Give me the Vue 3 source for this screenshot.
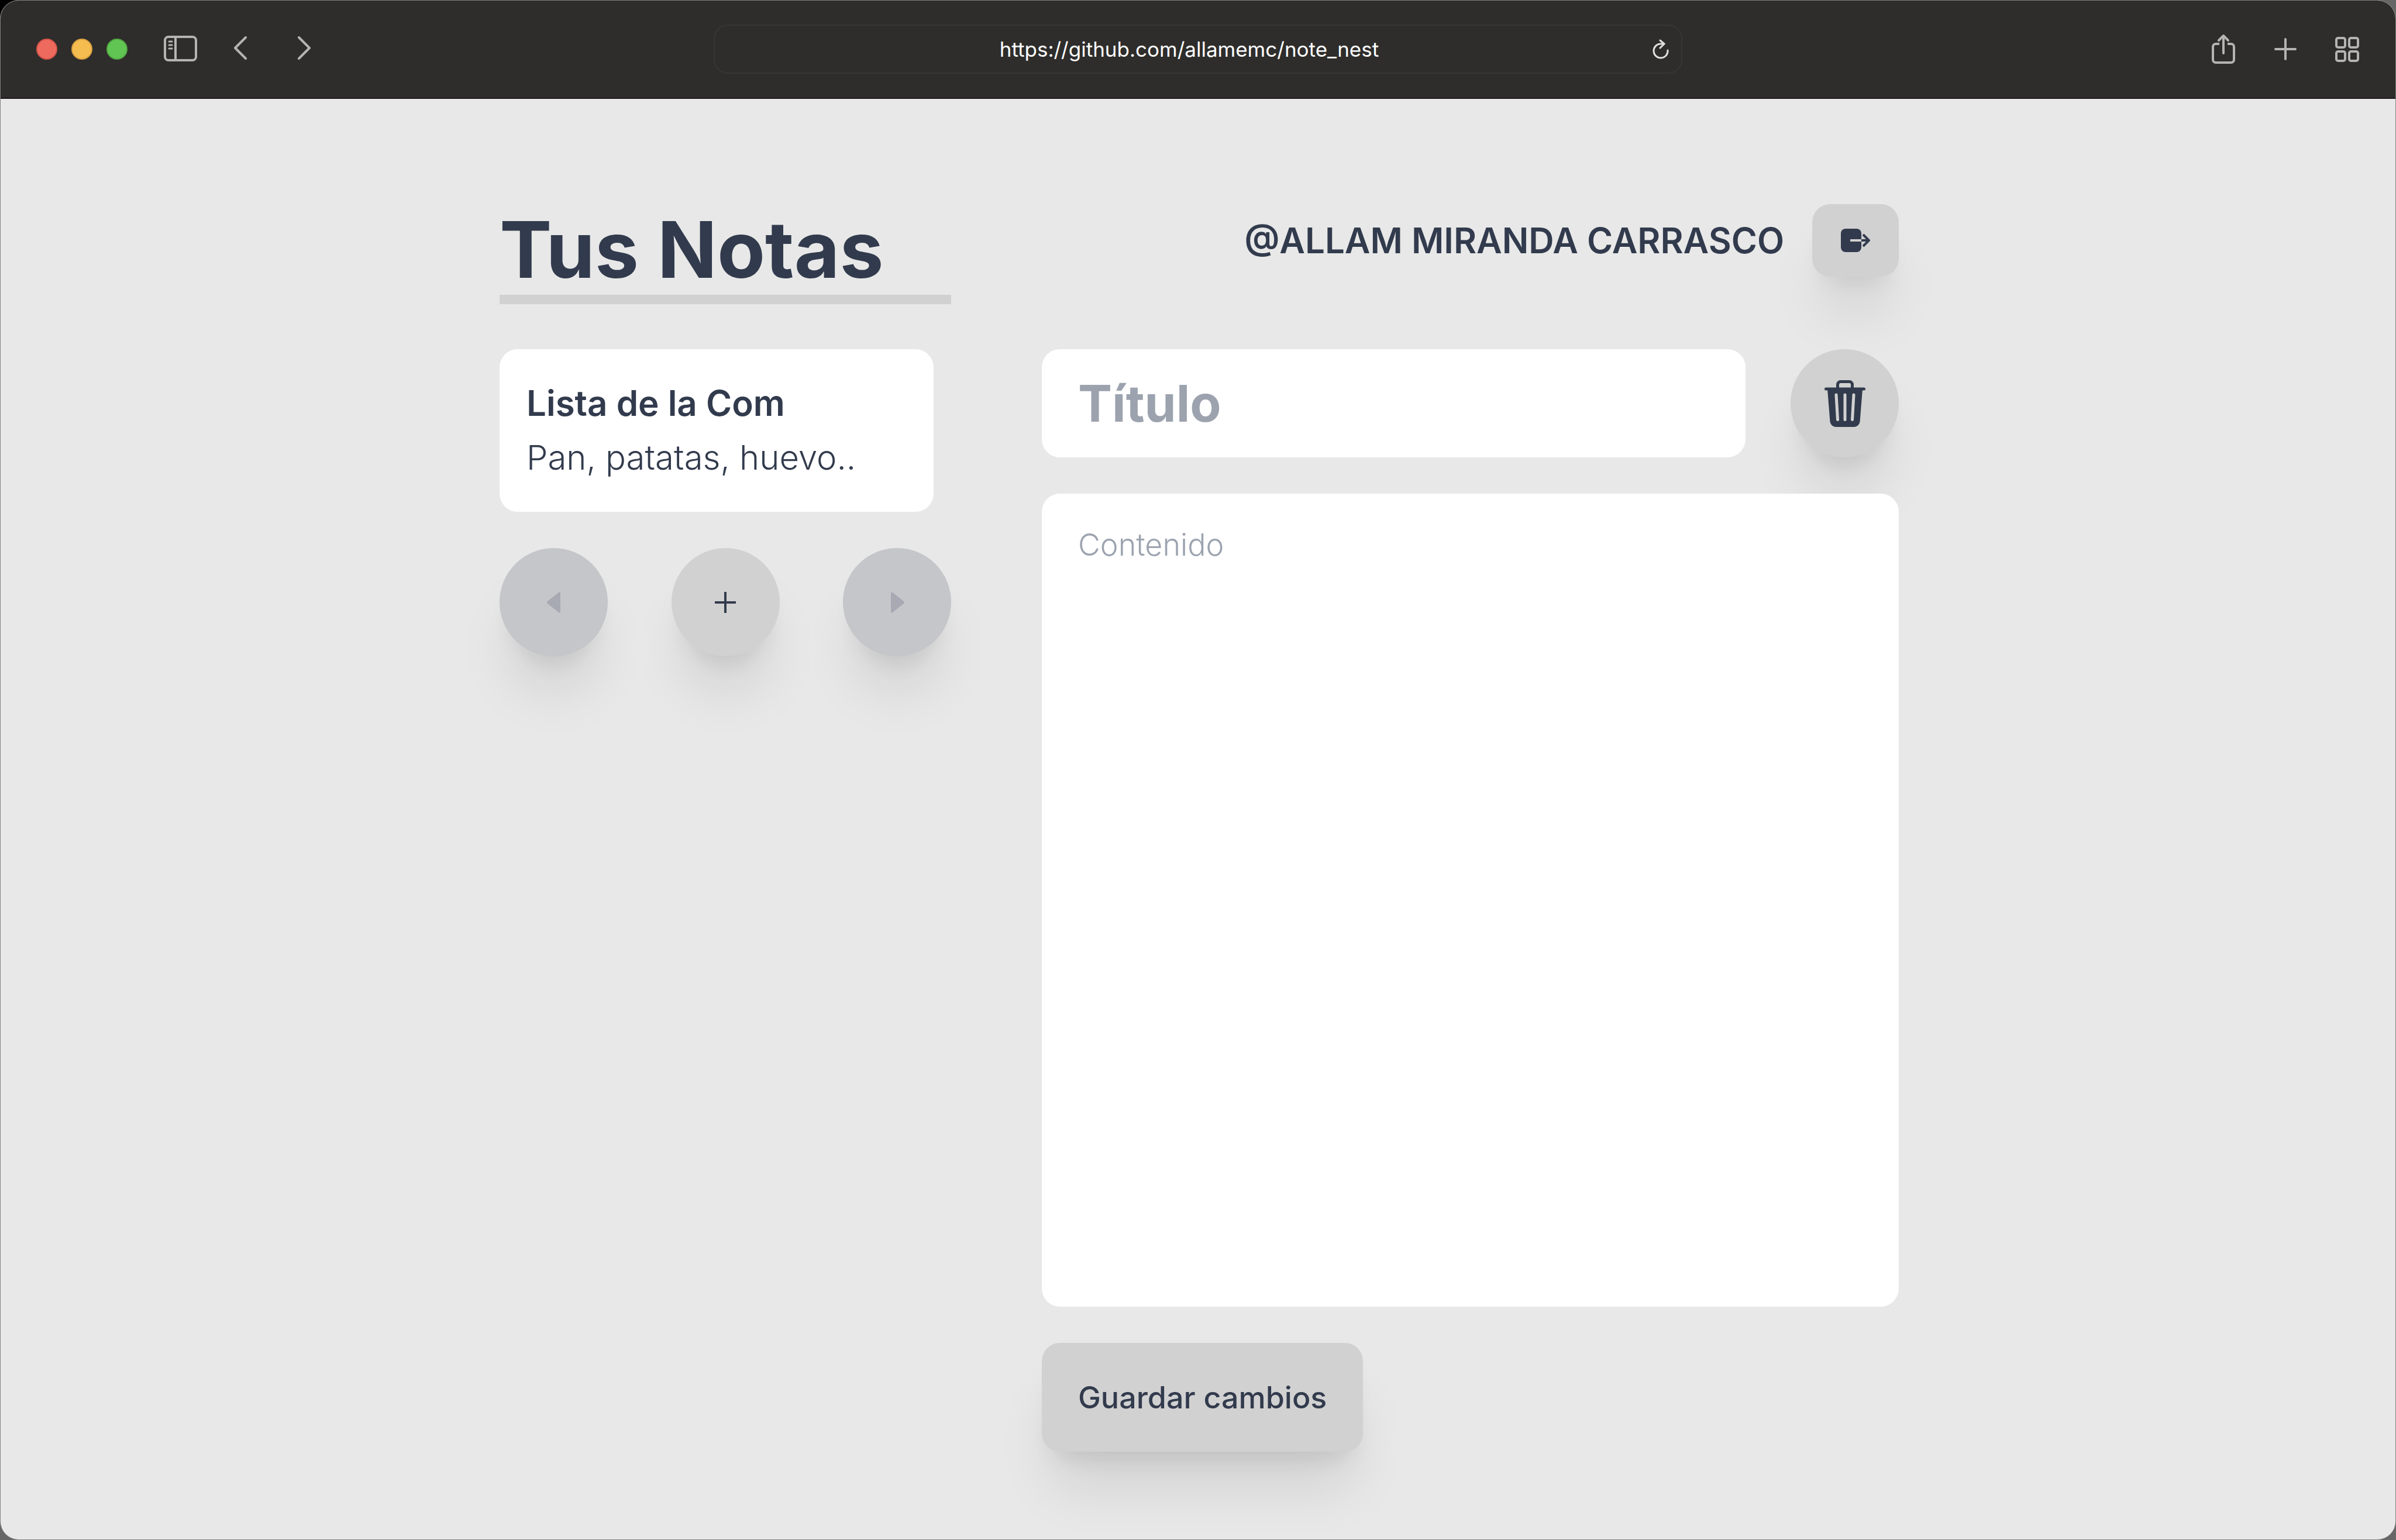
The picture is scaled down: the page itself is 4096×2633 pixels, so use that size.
<script setup>
import { ref } from 'vue'

const address = ref('https://github.com/allamemc/note_nest')
const user = '@ALLAM MIRANDA CARRASCO'
const title = ref('')
const content = ref('')
const notes = [{ title: 'Lista de la Com', preview: 'Pan, patatas, huevo..' }]
const lights = ['red', 'amber', 'green']
</script>

<template>
  <div class="window">
    <header class="toolbar">
      <div class="side">
        <div class="lights">
          <span v-for="light in lights" :key="light" class="light" :class="light"></span>
        </div>
        <button class="tool sidebar" type="button" aria-label="Barra lateral">
          <svg width="58" height="46" viewBox="0 0 58 46" fill="none" stroke="currentColor" stroke-width="4">
            <rect x="2" y="2" width="53" height="40" rx="6" />
            <path d="M20 2v40" />
            <path d="M9 10h5M9 16h5M9 22h5" stroke-width="3" stroke-linecap="round" />
          </svg>
        </button>
        <button class="tool" type="button" aria-label="Atrás">
          <svg width="26" height="44" viewBox="0 0 26 44" fill="none" stroke="currentColor" stroke-width="4" stroke-linecap="round" stroke-linejoin="round">
            <path d="M22 2 4 20l18 18" />
          </svg>
        </button>
        <button class="tool forward" type="button" aria-label="Adelante">
          <svg width="26" height="44" viewBox="0 0 26 44" fill="none" stroke="currentColor" stroke-width="4" stroke-linecap="round" stroke-linejoin="round">
            <path d="m5 2 18 18L5 38" />
          </svg>
        </button>
      </div>

      <div class="address">
        <input v-model="address" type="text" aria-label="Dirección" />
        <button class="reload" type="button" aria-label="Recargar">
          <svg width="30" height="34" viewBox="0 0 30 34" fill="none" stroke="currentColor" stroke-width="3" stroke-linecap="round" stroke-linejoin="round">
            <path d="M27 19A12 12 0 1 1 15 8h6" />
            <path d="m14 2 7 6-7 7" />
          </svg>
        </button>
      </div>

      <div class="side end">
        <button class="tool" type="button" aria-label="Compartir">
          <svg width="42" height="52" viewBox="0 0 42 52" fill="none" stroke="currentColor" stroke-width="4" stroke-linecap="round" stroke-linejoin="round">
            <path d="M14 17H8a5 5 0 0 0-5 5v22a5 5 0 0 0 5 5h26a5 5 0 0 0 5-5V22a5 5 0 0 0-5-5h-6" stroke-linecap="butt" />
            <path d="M21 33V3M13 11l8-8 8 8" />
          </svg>
        </button>
        <button class="tool" type="button" aria-label="Nueva pestaña">
          <svg width="38" height="38" viewBox="0 0 38 38" fill="none" stroke="currentColor" stroke-width="4" stroke-linecap="round">
            <path d="M19 2v34M2 19h34" />
          </svg>
        </button>
        <button class="tool" type="button" aria-label="Vista general">
          <svg width="42" height="44" viewBox="0 0 42 44" fill="none" stroke="currentColor" stroke-width="4">
            <rect x="2" y="3" width="15" height="16" rx="3" />
            <rect x="24" y="3" width="15" height="16" rx="3" />
            <rect x="2" y="26" width="15" height="16" rx="3" />
            <rect x="24" y="26" width="15" height="16" rx="3" />
          </svg>
        </button>
      </div>
    </header>

    <main class="app">
      <h1>Tus Notas</h1>
      <div class="account">
        <span class="user">{{ user }}</span>
        <button class="logout raised" type="button" aria-label="Cerrar sesión">
          <svg width="50" height="40" viewBox="0 0 50 40" fill="none">
            <rect width="35" height="40" rx="8" fill="currentColor" />
            <path d="M16 20h19" stroke="#d1d1d1" stroke-width="4" />
            <path d="M35 20h12M38 10l10 10-10 10" stroke="currentColor" stroke-width="4" />
          </svg>
        </button>
      </div>

      <aside class="list">
        <article v-for="note in notes" :key="note.title" class="note">
          <h2>{{ note.title }}</h2>
          <p>{{ note.preview }}</p>
        </article>
        <nav class="pager">
          <button class="round raised" type="button" disabled aria-label="Anterior">
            <svg width="36" height="36" viewBox="0 0 36 36" fill="currentColor">
              <path d="M7 16 26 1q3-2 3 2v30q0 4-3 2L7 20q-2-2 0-4z" />
            </svg>
          </button>
          <button class="round raised" type="button" aria-label="Nueva nota">
            <svg width="36" height="36" viewBox="0 0 36 36" fill="none" stroke="currentColor" stroke-width="4">
              <path d="M18 0v36M0 18h36" />
            </svg>
          </button>
          <button class="round raised" type="button" disabled aria-label="Siguiente">
            <svg width="36" height="36" viewBox="0 0 36 36" fill="currentColor">
              <path d="M29 16 10 1Q7-1 7 3v30q0 4 3 2l19-15q2-2 0-4z" />
            </svg>
          </button>
        </nav>
      </aside>

      <form class="editor" @submit.prevent>
        <div class="heading">
          <input v-model="title" class="field title" type="text" placeholder="Título" aria-label="Título" />
          <button class="round raised" type="button" aria-label="Eliminar nota">
            <svg width="80" height="80" viewBox="0 0 16 16" fill="currentColor">
              <path d="M11 1.5v1h3.5a.5.5 0 0 1 0 1h-.538l-.853 10.66A2 2 0 0 1 11.115 16h-6.23a2 2 0 0 1-1.994-1.84L2.038 3.5H1.5a.5.5 0 0 1 0-1H5v-1A1.5 1.5 0 0 1 6.5 0h3A1.5 1.5 0 0 1 11 1.5Zm-5 0v1h4v-1a.5.5 0 0 0-.5-.5h-3a.5.5 0 0 0-.5.5ZM4.5 5.029l.5 8.5a.5.5 0 1 0 .998-.06l-.5-8.5a.5.5 0 1 0-.998.06Zm6.53-.528a.5.5 0 0 0-.528.47l-.5 8.5a.5.5 0 0 0 .998.058l.5-8.5a.5.5 0 0 0-.47-.528ZM8 4.5a.5.5 0 0 0-.5.5v8.5a.5.5 0 0 0 1 0V5a.5.5 0 0 0-.5-.5Z" />
            </svg>
          </button>
        </div>
        <textarea v-model="content" class="field content" placeholder="Contenido" aria-label="Contenido"></textarea>
        <button class="save raised" type="submit">Guardar cambios</button>
      </form>
    </main>
  </div>
</template>

<style>
body {
  margin: 0;
  background: linear-gradient(#000, #000) 0 0 / 40px 40px no-repeat, #666;
}
</style>

<style scoped>
* {
  box-sizing: border-box;
}
.window {
  display: flex;
  flex-direction: column;
  min-height: 100vh;
  overflow: hidden;
  border: 1px solid #808080;
  border-radius: 32px;
  background: #e8e8e8;
  color: #323b4d;
  font-family: Inter, sans-serif;
}
button,
input,
textarea {
  border: 0;
  margin: 0;
  padding: 0;
  font-family: inherit;
  color: inherit;
  outline: none;
}
button {
  display: flex;
  align-items: center;
  justify-content: center;
  flex: none;
}
svg {
  display: block;
}

/* browser toolbar */
.toolbar {
  display: grid;
  grid-template-columns: 1fr minmax(0, 1656px) 1fr;
  align-items: center;
  height: 168px;
  padding: 0 61px;
  background: #2e2d2b;
  border-bottom: 2px solid #1c161b;
}
.side {
  display: flex;
  align-items: center;
}
.tool {
  background: none;
  color: #b4b4b4;
}
.lights {
  display: flex;
  gap: 24px;
}
.light {
  width: 36px;
  height: 36px;
  border-radius: 50%;
  border: 2px solid;
}
.red {
  background: #ef6a5e;
  border-color: #d4544a;
}
.amber {
  background: #f5bd4f;
  border-color: #d8a040;
}
.green {
  background: #61c554;
  border-color: #52a842;
}
.sidebar {
  margin: 0 60px 0 62px;
}
.forward {
  margin-left: 82px;
}
.end {
  justify-content: flex-end;
  gap: 66px;
}
.address {
  display: flex;
  align-items: center;
  height: 84px;
  padding: 0 20px;
  border: 2px solid #373634;
  border-radius: 24px;
}
.address input {
  flex: 1;
  min-width: 0;
  background: none;
  color: #fff;
  font-size: 35px;
  line-height: 44px;
  text-align: center;
}
.reload {
  background: none;
  color: #e0e0e0;
}

/* notes */
.app {
  display: grid;
  grid-template-columns: 772px minmax(0, 1fr);
  column-gap: 155px;
  row-gap: 77px;
  width: 100%;
  max-width: 2396px;
  margin: 0 auto;
  padding: 180px 0 77px 4px;
}
h1 {
  margin: 0;
  border-bottom: 16px solid #d1d1d1;
  font-size: 134px;
  font-weight: 700;
  line-height: 155px;
}
.account {
  display: flex;
  align-items: flex-start;
  justify-content: flex-end;
  gap: 48px;
}
.user {
  font-size: 60px;
  font-weight: 600;
  line-height: 124px;
  white-space: nowrap;
}
.raised {
  background: #d1d1d1;
  box-shadow: 0 77px 96px -19px rgba(0, 0, 0, 0.1), 0 31px 39px -23px rgba(0, 0, 0, 0.1);
}
.logout {
  width: 148px;
  height: 124px;
  border-radius: 31px;
}
.list,
.editor {
  display: flex;
  flex-direction: column;
  align-items: flex-start;
  gap: 62px;
}
.note {
  width: 742px;
  padding: 46px;
  border-radius: 31px;
  background: #fff;
  white-space: nowrap;
}
.note h2,
.note p {
  margin: 0;
  line-height: 93px;
}
.note h2 {
  font-size: 60px;
  font-weight: 600;
}
.note p {
  font-size: 58px;
  font-weight: 300;
}
.pager,
.heading {
  display: flex;
  justify-content: space-between;
  width: 100%;
}
.heading {
  gap: 77px;
}
.round {
  width: 185px;
  height: 185px;
  border-radius: 50%;
}
.round:disabled {
  background: #c5c6ca;
  color: #a7aab3;
}
.field {
  width: 100%;
  border-radius: 31px;
  background: #fff;
}
.field::placeholder {
  color: #9ca3af;
  opacity: 1;
}
.title {
  flex: 1;
  min-width: 0;
  padding: 0 62px;
  font-size: 87px;
  font-weight: 700;
}
.content {
  position: relative;
  display: block;
  height: 1390px;
  padding: 46px 62px;
  font-size: 52px;
  font-weight: 300;
  line-height: 84px;
  resize: none;
}
.save {
  height: 186px;
  padding: 0 62px;
  border-radius: 31px;
  font-size: 52px;
  font-weight: 500;
}
</style>
